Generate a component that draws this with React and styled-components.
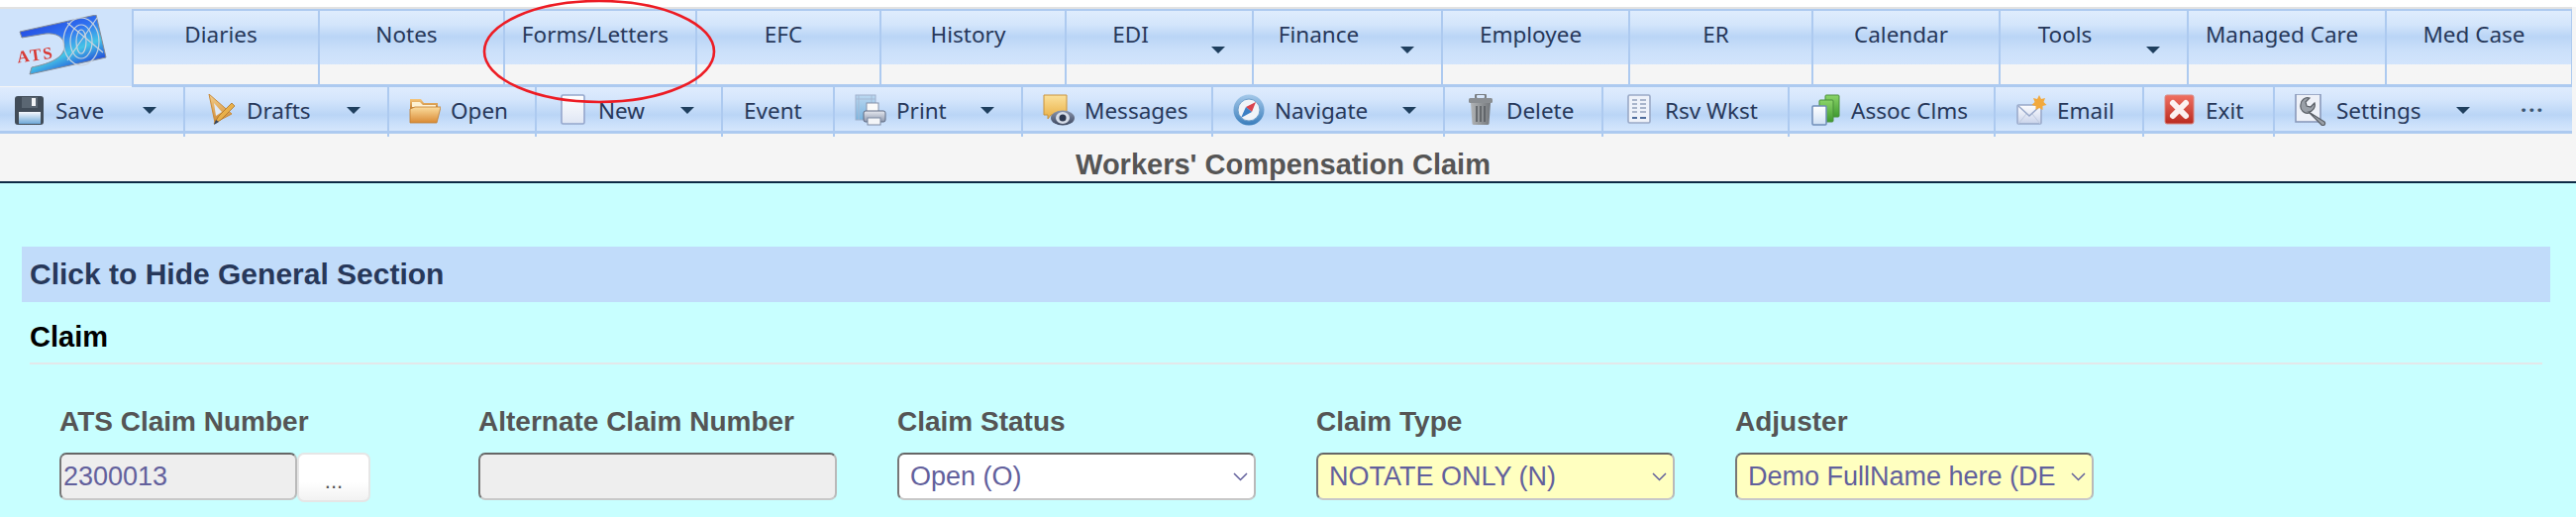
import React from "react";
import styled, { createGlobalStyle } from "styled-components";

const Global = createGlobalStyle`
  html, body { margin: 0; padding: 0; background: #c8ffff; }
  body { width: 2601px; height: 522px; overflow: hidden; font-family: "Liberation Sans", Arial, sans-serif; }
`;

const Page = styled.div`
  position: relative;
  width: 2601px;
  height: 522px;
  overflow: hidden;
  background: #c8ffff;
`;
const Header = styled.header`
  background: #f5f5f5;
  padding-top: 7px;
  padding-right: 4px;
  height: 185px;
  box-sizing: border-box;
  border-bottom: 2px solid #0d2a45;
  box-shadow: inset 0 7px 0 #fff;
`;
const TopLine = styled.div`
  height: 2px;
  background: #e2e2e2;
`;
const NavRow = styled.nav`
  display: flex;
  height: 79px;
  box-sizing: border-box;
`;
const LogoCell = styled.div`
  width: 133px;
  height: 78px;
  flex: none;
  background: #cfe3fb;
  display: flex;
  padding: 6px 0 0 16px;
  box-sizing: border-box;
`;
const Tabs = styled.div`
  flex: 1;
  display: flex;
  border-top: 2px solid #adcaf0;
  border-bottom: 3px solid #adcaf0;
  border-right: 1px solid #adcaf0;
`;
const Tab = styled.div`
  position: relative;
  width: ${(p) => p.$w}px;
  flex: none;
  box-sizing: border-box;
  border-left: 2px solid #adcaf0;
  background: linear-gradient(#dfecfd 0, #d3e5fb 14px, #bad5f6 26px, #cbe0fa 40px, #d2e4fc 54px, #f5f5f5 54px);
  padding: 6px ${(p) => (p.$menu ? 58 : 10)}px 0 0;
  text-align: center;
  font: 22.5px/36px "Noto Sans", "Open Sans", sans-serif;
  color: #27385a;
  white-space: nowrap;
`;
const TabCaret = styled.span`
  position: absolute;
  right: 27px;
  top: 36px;
  width: 14px;
  height: 7px;
  display: block;
  & > svg { display: block; }
`;
const ToolRow = styled.div`
  display: flex;
  height: 47px;
  box-sizing: border-box;
  border-bottom: 3px solid #adcaf0;
  border-right: 1px solid #adcaf0;
`;
const Tool = styled.div`
  position: relative;
  display: flex;
  align-items: center;
  flex: none;
  width: ${(p) => p.$w}px;
  box-sizing: border-box;
  padding: 2px 0 0 ${(p) => (p.$first ? 14 : p.$plain ? 21 : 20)}px;
  border-left: ${(p) => (p.$first || p.$bare ? "none" : "2px solid #adcaf0")};
  background: linear-gradient(#dfecfd 0, #d5e6fc 12px, #bad5f6 28px, #c9dffa 36px, #d5e6fc 44px);
  font: 22.5px/44px "Noto Sans", "Open Sans", sans-serif;
  color: #27385a;
  white-space: nowrap;
  &::after {
    content: "";
    display: ${(p) => (p.$first || p.$bare ? "none" : "block")};
    position: absolute;
    left: -2px;
    top: 44px;
    width: 2px;
    height: 6px;
    background: #adcaf0;
  }
`;
const ToolLabel = styled.span`
  margin-top: 2px;
`;
const IconBox = styled.span`
  width: 32px;
  height: 32px;
  flex: none;
  margin-right: 10px;
  filter: blur(0.35px);
  display: block;
  & > svg { display: block; }
`;
const ToolCaret = styled.span`
  margin-left: auto;
  margin-right: 27px;
  width: 14px;
  height: 7px;
  flex: none;
  display: block;
  & > svg { display: block; }
`;
const Dots = styled.span`
  font: bold 22px/20px "Noto Sans", sans-serif;
  color: #3c5672;
  letter-spacing: 2px;
  margin: -14px 0 0 4px;
`;
const Title = styled.h1`
  margin: 0;
  text-align: center;
  font: bold 29px/30px "Liberation Sans", Arial, sans-serif;
  color: #555;
  padding: 16px 6px 0 0;
`;
const Main = styled.main`
  padding: 64px 26px 0 22px;
`;
const SectionBar = styled.div`
  height: 56px;
  background: #c1dcfa;
  padding-left: 8px;
  font: bold 30px/56px "Liberation Sans", Arial, sans-serif;
  color: #27385a;
`;
const SubHead = styled.h2`
  margin: 17px 8px 0 8px;
  padding: 0 0 8px;
  border-bottom: 2px solid #e3e8ea;
  font: bold 29px/36px "Liberation Sans", Arial, sans-serif;
  color: #000;
`;
const Fields = styled.div`
  display: grid;
  grid-template-columns: repeat(5, 423px);
  padding: 40px 0 0 38px;
`;
const Field = styled.div`
  display: flex;
  flex-direction: column;
`;
const Label = styled.label`
  font: bold 28px/36px "Liberation Sans", Arial, sans-serif;
  color: #555;
  margin-bottom: 13px;
`;
const InputRow = styled.div`
  display: flex;
  align-items: flex-start;
`;
const boxStyle = `
  height: 48px;
  box-sizing: border-box;
  border: 2px solid #b9b9b9;
  border-top-color: #666;
  border-left-color: #777;
  border-bottom-color: #c8c8c8;
  border-radius: 7px;
  font: 27px "Liberation Sans", Arial, sans-serif;
  color: #62609c;
`;
const TextBox = styled.input`
  ${boxStyle}
  width: ${(p) => p.$w}px;
  padding: 0 2px;
  background: #eee;
`;
const DotsButton = styled.button`
  width: 74px;
  height: 50px;
  box-sizing: border-box;
  border: 2px solid #e6e6e6;
  border-radius: 7px;
  background: linear-gradient(#fff 60%, #f2f2f2);
  color: #555;
  font: 22px "Liberation Sans", Arial, sans-serif;
  padding: 8px 0 0;
`;
const SelectWrap = styled.div`
  position: relative;
  width: 362px;
  height: 48px;
`;
const Select = styled.select`
  ${boxStyle}
  width: 100%;
  appearance: none;
  padding: 0 35px 0 11px;
  background: ${(p) => (p.$required ? "#ffffc0" : "#fff")};
`;
const Chevron = styled.svg`
  position: absolute;
  right: 8px;
  top: 20px;
  pointer-events: none;
`;
const Callout = styled.svg`
  position: absolute;
  left: 486px;
  top: 0;
  pointer-events: none;
`;

const Caret = () => (
  <svg width="14" height="7" viewBox="0 0 14 7"><path d="M0 0h14L7 7z" fill="#1f3f5e" /></svg>
);

const S = ({ children }) => <svg width="32" height="32" viewBox="0 0 32 32">{children}</svg>;
const G = ({ id, a, b, x }) => (
  <linearGradient id={id} x1="0" y1="0" x2={x ? "1" : "0"} y2={x ? "0" : "1"}>
    <stop offset="0" stopColor={a} />
    <stop offset="1" stopColor={b} />
  </linearGradient>
);

const icons = {
  save: (
    <S>
      <defs><G id="sv" a="#f4f8fc" b="#6fa8d8" /></defs>
      <rect x="1" y="2" width="29" height="29" rx="3" fill="#414c58" />
      <rect x="8" y="3" width="16" height="11" fill="#5a6672" />
      <rect x="18" y="4" width="4" height="8" fill="#f2f4f6" />
      <rect x="5" y="18" width="22" height="12" fill="url(#sv)" />
    </S>
  ),
  drafts: (
    <S>
      <defs><G id="dr" a="#f3cf8c" b="#d08a35" /></defs>
      <path d="M4 0l23 20-17 9z" fill="url(#dr)" stroke="#c98a3a" />
      <path d="M9 9l8 9-6 4z" fill="#dfe9f6" />
      <path d="M9 30l5-8L27 9l3 3-14 14z" fill="#e9b04a" stroke="#a8722a" strokeWidth=".8" />
      <path d="M9 31l2-5 3 2z" fill="#33435e" />
    </S>
  ),
  open: (
    <S>
      <defs><G id="op" a="#fbdc9d" b="#d98b35" /><G id="op2" a="#f6c67a" b="#b76f24" /></defs>
      <path d="M1 5h11l3 4h14v8H1z" fill="url(#op2)" />
      <path d="M3 8h8l3 3h13v2H3z" fill="#fdf1d2" />
      <path d="M1 29V15l5-2h26l-4 16z" fill="url(#op)" stroke="#c07c2e" strokeWidth=".8" />
    </S>
  ),
  new: (
    <S>
      <defs><G id="nw" a="#fff" b="#dfe6f4" /></defs>
      <rect x="5" y="1" width="23" height="29" rx="1.5" fill="url(#nw)" stroke="#94a6cc" strokeWidth="1.6" />
    </S>
  ),
  print: (
    <S>
      <defs><G id="pr" a="#bcd8f0" b="#78b4e0" /><G id="pr2" a="#e6e9f0" b="#8c97ad" /></defs>
      <rect x="1" y="1" width="20" height="25" fill="url(#pr)" stroke="#9fb0cc" />
      <path d="M4 1v25M17 1v25M1 5h20" stroke="#a7b9d3" fill="none" />
      <rect x="12" y="9" width="12" height="10" fill="#fafafa" stroke="#8592aa" />
      <rect x="9" y="17" width="22" height="11" rx="2" fill="url(#pr2)" stroke="#5e6a82" />
      <rect x="13" y="24" width="13" height="7" fill="#f3f5f8" stroke="#7d89a2" />
    </S>
  ),
  messages: (
    <S>
      <defs><G id="ms" a="#fbe19c" b="#e9ae42" /><G id="ms2" a="#8b96ad" b="#3c4760" /></defs>
      <path d="M1 1h23v20H8l-3 4v-4H1z" fill="url(#ms)" stroke="#c9923a" />
      <ellipse cx="20" cy="24" rx="12" ry="7.5" fill="url(#ms2)" />
      <ellipse cx="20" cy="24" rx="7" ry="6" fill="#d6dde9" />
      <circle cx="20" cy="24" r="3.5" fill="#2d3850" />
    </S>
  ),
  navigate: (
    <S>
      <defs><G id="nv" a="#a5c9ea" b="#3a7dbb" /></defs>
      <circle cx="16" cy="16" r="15.5" fill="url(#nv)" />
      <circle cx="16" cy="16" r="11" fill="#f1f4f8" stroke="#6f9fcb" />
      <path d="M23 8l-4 10-6-5z" fill="#d9434e" />
      <path d="M8 24l5-11 6 5z" fill="#3b7fc4" />
    </S>
  ),
  delete: (
    <S>
      <defs><G id="dl" a="#b1b4b6" b="#73777b" x /></defs>
      <rect x="11" y="0" width="10" height="5" rx="2" fill="none" stroke="#797d81" strokeWidth="2" />
      <rect x="4" y="4" width="24" height="5" rx="1.5" fill="#8a8e92" />
      <path d="M6 9h20l-1.5 21a1.5 1.5 0 0 1-1.5 1H9a1.5 1.5 0 0 1-1.5-1z" fill="url(#dl)" />
      <path d="M12 12v16M16 12v16M20 12v16" stroke="#595d61" strokeWidth="1.6" />
    </S>
  ),
  rsv: (
    <S>
      <rect x="5" y="1" width="22" height="28" rx="1.5" fill="#eef2fa" stroke="#9aa9c6" strokeWidth="1.6" />
      <path d="M9 6h5M9 10h5M9 14h5M9 18h5M17 6h6M17 10h6M17 14h6M17 18h6" stroke="#a9b5cb" strokeWidth="2" />
      <path d="M9 24h5M17 24h6" stroke="#4e6c9c" strokeWidth="2" />
    </S>
  ),
  assoc: (
    <S>
      <defs><G id="as" a="#8bd468" b="#3f9a30" /><G id="as2" a="#fff" b="#cfe0f4" /></defs>
      <rect x="16" y="1" width="14" height="22" rx="1" fill="url(#as)" stroke="#4a8f3c" />
      <rect x="10" y="6" width="14" height="22" rx="1" fill="url(#as)" stroke="#4a8f3c" />
      <rect x="3" y="12" width="14" height="19" rx="1" fill="url(#as2)" stroke="#6f8db8" strokeWidth="1.5" />
    </S>
  ),
  email: (
    <S>
      <defs><G id="em" a="#fdfdff" b="#c9d3ea" /></defs>
      <rect x="2" y="11" width="24" height="19" rx="1" fill="url(#em)" stroke="#98a8c9" strokeWidth="1.5" />
      <path d="M3 12l11 10 11-10" fill="none" stroke="#98a8c9" strokeWidth="1.5" />
      <path d="M3 30l8-10M25 30l-8-10" stroke="#c0cbe0" />
      <path d="M24 1l2 4 4-1-1.500 4 3 3-4 1 0 4-3.500-2-3.500 2 0-4-4-1 3-3L18 4l4 1z" fill="#f2a93d" />
    </S>
  ),
  exit: (
    <S>
      <defs><G id="ex" a="#f07062" b="#b92a20" /></defs>
      <rect x="1" y="1" width="29" height="29" rx="2" fill="url(#ex)" stroke="#d98a84" />
      <path d="M9 9l13 13M22 9L9 22" stroke="#fff" strokeWidth="6" strokeLinecap="round" opacity=".92" />
    </S>
  ),
  settings: (
    <S>
      <rect x="1" y="0" width="25" height="28" fill="#eef1f8" stroke="#8a9abb" strokeWidth="1.6" />
      <path d="M6 11a7 7 0 0 1 9-7l-4 4 1 4 4 1 4-4a7 7 0 0 1-6 9L30 28a2 2 0 0 1-3 3L15 19a7 7 0 0 1-9-8z" fill="#9aa0a8" stroke="#5a5f66" strokeWidth="1.2" />
    </S>
  ),
};

const tabs = [
  ["Diaries", 188], ["Notes", 187], ["Forms/Letters", 194], ["EFC", 186], ["History", 187],
  ["EDI", 189, true], ["Finance", 191, true], ["Employee", 189], ["ER", 185], ["Calendar", 189],
  ["Tools", 190, true], ["Managed Care", 200], ["Med Case", 188],
];
const tools = [
  ["Save", 185, "save", true], ["Drafts", 206, "drafts", true], ["Open", 149, "open"], ["New", 188, "new", true],
  ["Event", 113], ["Print", 190, "print", true], ["Messages", 192, "messages"], ["Navigate", 234, "navigate", true],
  ["Delete", 160, "delete"], ["Rsv Wkst", 188, "rsv"], ["Assoc Clms", 208, "assoc"], ["Email", 150, "email"],
  ["Exit", 132, "exit"], ["Settings", 226, "settings", true],
];

const Arrow = () => (
  <Chevron width="15" height="9" viewBox="0 0 15 9">
    <path d="M1 1l6.500 6.500L14 1" fill="none" stroke="#62609c" strokeWidth="1.500" />
  </Chevron>
);

export default function App() {
  return (
    <Page>
      <Global />
      <Header>
        <TopLine />
        <NavRow>
          <LogoCell>
            <svg width="94" height="64" viewBox="0 0 94 64" style={{ filter: "blur(0.5px)" }}>
              <defs>
                <linearGradient id="lg" x1="0" y1="0" x2="0.6" y2="1">
                  <stop offset="0" stopColor="#2034d8" />
                  <stop offset=".45" stopColor="#2f70f0" />
                  <stop offset=".72" stopColor="#46c4e6" />
                  <stop offset="1" stopColor="#1c3cd8" />
                </linearGradient>
              </defs>
              <path d="M4 17L81 0 91 43 14 60l2-7C30 50 48 45 49 33 50 22 40 18 30 19L6 23z" fill="url(#lg)" stroke="#858b94" strokeWidth="1" />
              <g fill="none" stroke="#c9d3de" strokeWidth="1.200">
                <ellipse cx="66" cy="27" rx="5" ry="12" />
                <ellipse cx="66" cy="27" rx="11" ry="17" />
                <ellipse cx="66" cy="27" rx="18" ry="24" />
                <path d="M52 8L88 38M82 3L52 46" />
              </g>
              <text x="1" y="46" transform="rotate(-8 20 40)" fontFamily="Liberation Serif, serif" fontWeight="700" fontSize="17" letterSpacing="2" fill="#d83a35">ATS</text>
            </svg>
          </LogoCell>
          <Tabs>
            {tabs.map(([t, w, m]) => (
              <Tab key={t} $w={w} $menu={m}>
                {t}
                {m && <TabCaret><Caret /></TabCaret>}
              </Tab>
            ))}
          </Tabs>
        </NavRow>
        <ToolRow>
          {tools.map(([t, w, ic, m], i) => (
            <Tool key={t} $w={w} $first={i === 0} $plain={!ic}>
              {ic && <IconBox>{icons[ic]}</IconBox>}
              <ToolLabel>{t}</ToolLabel>
              {m && <ToolCaret><Caret /></ToolCaret>}
            </Tool>
          ))}
          <Tool $w={76} $bare><Dots>...</Dots></Tool>
        </ToolRow>
        <Title>Workers' Compensation Claim</Title>
      </Header>
      <Main>
        <SectionBar>Click to Hide General Section</SectionBar>
        <SubHead>Claim</SubHead>
        <Fields>
          <Field>
            <Label>ATS Claim Number</Label>
            <InputRow>
              <TextBox $w={240} readOnly value="2300013" />
              <DotsButton>...</DotsButton>
            </InputRow>
          </Field>
          <Field>
            <Label>Alternate Claim Number</Label>
            <InputRow><TextBox $w={362} readOnly value="" /></InputRow>
          </Field>
          <Field>
            <Label>Claim Status</Label>
            <SelectWrap>
              <Select defaultValue="O"><option value="O">Open (O)</option></Select>
              <Arrow />
            </SelectWrap>
          </Field>
          <Field>
            <Label>Claim Type</Label>
            <SelectWrap>
              <Select $required defaultValue="N"><option value="N">NOTATE ONLY (N)</option></Select>
              <Arrow />
            </SelectWrap>
          </Field>
          <Field>
            <Label>Adjuster</Label>
            <SelectWrap>
              <Select $required defaultValue="D"><option value="D">Demo FullName here (DEMO)</option></Select>
              <Arrow />
            </SelectWrap>
          </Field>
        </Fields>
      </Main>
      <Callout width="240" height="110" viewBox="0 0 240 110">
        <ellipse cx="119" cy="52" rx="116" ry="51" fill="none" stroke="#ed1c24" strokeWidth="2.600" />
      </Callout>
    </Page>
  );
}
